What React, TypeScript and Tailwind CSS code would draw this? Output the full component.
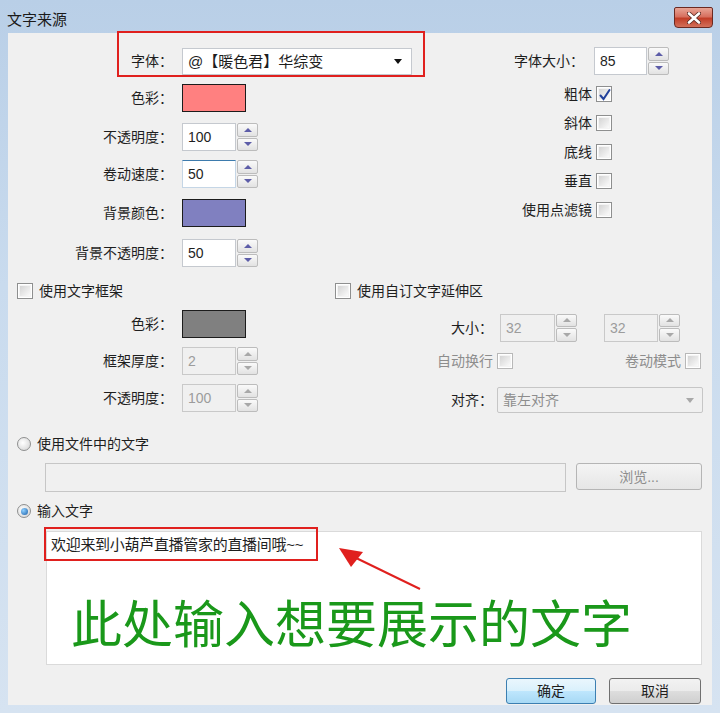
import React from "react";

function Check({ checked = false, disabled = false }: { checked?: boolean; disabled?: boolean }) {
  return (
    <span
      className={`relative flex w-[16px] h-[16px] shrink-0 items-center justify-center border ${
        disabled ? "border-[#b8b8b8]" : "border-[#8e8f8f]"
      } bg-white`}
    >
      <span className="w-[12px] h-[12px] bg-[linear-gradient(135deg,#d4d4d4,#fafafa)] border border-[#f4f4f4]" />
      {checked && (
        <svg className="absolute inset-0" width="16" height="16" viewBox="0 0 16 16">
          <path d="M3.5 8.5 L6.5 12 L12.5 3" fill="none" stroke="#21409a" strokeWidth="2" strokeLinecap="round" />
        </svg>
      )}
    </span>
  );
}

function Radio({ checked = false }: { checked?: boolean }) {
  return (
    <span className="flex w-[14px] h-[14px] shrink-0 items-center justify-center rounded-full border border-[#8e8f8f] bg-[radial-gradient(circle_at_40%_40%,#ffffff,#d0d0d0)]">
      {checked && <span className="w-[7px] h-[7px] rounded-full bg-[radial-gradient(circle_at_35%_35%,#8fd0ff,#1a5ea8)]" />}
    </span>
  );
}

function SpinButtons({ disabled = false }: { disabled?: boolean }) {
  const tri = disabled ? "border-b-[#a8a8a8]" : "border-b-[#5d5da8]";
  const triDown = disabled ? "border-t-[#a8a8a8]" : "border-t-[#5d5da8]";
  return (
    <div className="ml-[1px] flex w-[21px] flex-col gap-[1px]">
      <div className="flex flex-1 items-center justify-center rounded-[2px] border border-[#bcbcbc] bg-[linear-gradient(#fafafa,#e2e2e2)]">
        <span className={`h-0 w-0 border-x-[4px] border-x-transparent border-b-[4px] ${tri}`} />
      </div>
      <div className="flex flex-1 items-center justify-center rounded-[2px] border border-[#bcbcbc] bg-[linear-gradient(#fafafa,#e2e2e2)]">
        <span className={`h-0 w-0 border-x-[4px] border-x-transparent border-t-[4px] ${triDown}`} />
      </div>
    </div>
  );
}

function Spin({
  value,
  className,
  disabled = false,
  focus = false,
}: {
  value: string;
  className: string;
  disabled?: boolean;
  focus?: boolean;
}) {
  return (
    <div className={`flex h-[28px] ${className}`}>
      <div
        className={`flex flex-1 items-center border px-[5px] text-[14px] ${
          disabled
            ? "border-[#c9c9c9] bg-[#f0f0f0] text-[#9c9c9c]"
            : focus
            ? "border-[#c5d6e6] border-t-[#3d7bad] bg-white text-[#1e1e1e]"
            : "border-[#c5c9cf] bg-white text-[#1e1e1e]"
        }`}
      >
        {value}
      </div>
      <SpinButtons disabled={disabled} />
    </div>
  );
}

function Swatch({ color }: { color: string }) {
  return <div className={`h-[28px] w-[64px] border border-[#1c1c1c] ${color}`} />;
}

function LRow({ label, children, mt }: { label: string; children: React.ReactNode; mt: string }) {
  return (
    <div className={`flex h-[28px] items-center ${mt}`}>
      <span className="w-[166px] pr-[1px] text-right text-[14px] text-[#1e1e1e]">{label}</span>
      <div className="ml-[8px]">{children}</div>
    </div>
  );
}

function CRow({ label, checked = false, mt }: { label: string; checked?: boolean; mt: string }) {
  return (
    <div className={`flex h-[17px] items-center ${mt}`}>
      <span className="w-[168px] pr-[4px] text-right text-[14px] text-[#1e1e1e]">{label}</span>
      <Check checked={checked} />
    </div>
  );
}

export default function App() {
  return (
    <div className="relative flex h-[713px] w-[720px] flex-col overflow-hidden bg-[linear-gradient(180deg,#b9cfe7_0%,#c9dbee_40%,#d6e3f1_100%)] font-['Liberation_Sans','Noto_Sans_CJK_SC',sans-serif] leading-none text-[#1e1e1e]">
      {/* title bar */}
      <div className="flex h-[33px] shrink-0 items-start">
        <span className="ml-[7px] mt-[12px] text-[15px] text-[#1a1a1a]">文字来源</span>
        <div className="ml-auto mr-[7px] mt-[7px] flex h-[21px] w-[39px] items-center justify-center rounded-b-[4px] rounded-t-[2px] border border-[#6b2a22] bg-[linear-gradient(180deg,#e8a596_0%,#d7705f_45%,#c23e28_55%,#d2705a_100%)]">
          <svg width="14" height="12" viewBox="0 0 14 12">
            <path d="M2 1.5 L12 10.5 M12 1.5 L2 10.5" stroke="#5a2a22" strokeWidth="4.2" strokeLinecap="round" />
            <path d="M2 1.5 L12 10.5 M12 1.5 L2 10.5" stroke="#ffffff" strokeWidth="2.6" strokeLinecap="round" />
          </svg>
        </div>
      </div>

      {/* client area */}
      <div className="mx-[8px] flex h-[672px] shrink-0 flex-col bg-[#f0f0f0]">
        {/* top section */}
        <div className="flex">
          <div className="w-[420px]">
            <LRow label="字体：" mt="mt-[14px]">
              <div className="flex h-[27px] w-[230px] items-center border border-[#c5c9cf] bg-white pl-[5px] pr-[9px] text-[15px]">
                <span>@【暖色君】华综变</span>
                <span className="ml-auto h-0 w-0 border-x-[4px] border-x-transparent border-t-[5px] border-t-[#111]" />
              </div>
            </LRow>
            <LRow label="色彩：" mt="mt-[9px]">
              <Swatch color="bg-[#ff8080]" />
            </LRow>
            <LRow label="不透明度：" mt="mt-[11px]">
              <Spin value="100" className="w-[76px]" />
            </LRow>
            <LRow label="卷动速度：" mt="mt-[9px]">
              <Spin value="50" className="w-[76px]" focus />
            </LRow>
            <LRow label="背景颜色：" mt="mt-[11px]">
              <Swatch color="bg-[#8080c0]" />
            </LRow>
            <LRow label="背景不透明度：" mt="mt-[12px]">
              <Spin value="50" className="w-[76px]" />
            </LRow>
          </div>
          <div className="flex-1">
            <div className="mt-[14px] flex h-[28px] items-center">
              <span className="w-[166px] pr-[10px] text-right text-[14px]">字体大小：</span>
              <Spin value="85" className="w-[75px]" />
            </div>
            <CRow label="粗体" checked mt="mt-[10px]" />
            <CRow label="斜体" mt="mt-[12px]" />
            <CRow label="底线" mt="mt-[12px]" />
            <CRow label="垂直" mt="mt-[12px]" />
            <CRow label="使用点滤镜" mt="mt-[12px]" />
          </div>
        </div>

        {/* frame / extend headers */}
        <div className="mt-[16px] flex h-[16px] items-center">
          <div className="flex w-[327px] items-center pl-[9px]">
            <Check />
            <span className="ml-[6px] text-[14px]">使用文字框架</span>
          </div>
          <div className="flex items-center">
            <Check />
            <span className="ml-[6px] text-[14px]">使用自订文字延伸区</span>
          </div>
        </div>

        <div className="flex">
          <div className="w-[327px]">
            <LRow label="色彩：" mt="mt-[11px]">
              <Swatch color="bg-[#808080]" />
            </LRow>
            <LRow label="框架厚度：" mt="mt-[9px]">
              <Spin value="2" className="w-[76px]" disabled />
            </LRow>
            <LRow label="不透明度：" mt="mt-[9px]">
              <Spin value="100" className="w-[76px]" disabled />
            </LRow>
          </div>
          <div className="flex-1">
            <div className="mt-[14px] flex h-[29px] items-center">
              <span className="w-[158px] text-right text-[14px]">大小：</span>
              <Spin value="32" className="ml-[7px] w-[77px]" disabled />
              <Spin value="32" className="ml-[27px] w-[76px]" disabled />
            </div>
            <div className="mt-[11px] flex h-[16px] items-center">
              <span className="w-[162px] pr-[4px] text-right text-[14px] text-[#8d8d8d]">自动换行</span>
              <Check disabled />
              <span className="w-[172px] pr-[4px] text-right text-[14px] text-[#8d8d8d]">卷动模式</span>
              <Check disabled />
            </div>
            <div className="mt-[18px] flex h-[26px] items-center">
              <span className="w-[158px] text-right text-[14px]">对齐：</span>
              <div className="ml-[4px] flex h-[26px] w-[206px] items-center rounded-[2px] border border-[#c6c6c6] bg-[#f0f0f0] pl-[5px] pr-[8px] text-[14px] text-[#8d8d8d]">
                <span>靠左对齐</span>
                <span className="ml-auto h-0 w-0 border-x-[4px] border-x-transparent border-t-[5px] border-t-[#a8a8a8]" />
              </div>
            </div>
          </div>
        </div>

        {/* text source */}
        <div className="mt-[24px] flex h-[14px] items-center pl-[9px]">
          <Radio />
          <span className="ml-[6px] text-[14px]">使用文件中的文字</span>
        </div>
        <div className="mt-[12px] flex h-[29px] pl-[37px]">
          <div className="w-[521px] border border-[#c6c6c6] bg-[#f0f0f0]" />
          <div className="ml-[10px] flex h-[27px] w-[126px] items-center justify-center rounded-[3px] border border-[#b5b5b5] bg-[linear-gradient(#f4f4f4,#e6e6e6)] text-[14px] text-[#8d8d8d]">
            浏览...
          </div>
        </div>
        <div className="mt-[12px] flex h-[14px] items-center pl-[9px]">
          <Radio checked />
          <span className="ml-[6px] text-[14px]">输入文字</span>
        </div>
        <div className="ml-[38px] mt-[13px] h-[134px] w-[656px] border border-[#dadada] bg-white">
          <div className="pl-[4px] pt-[5px] text-[15px] tracking-[-0.3px]">欢迎来到小葫芦直播管家的直播间哦~~</div>
          <div className="mt-[46px] pl-[24px] text-[51px] leading-[56px] text-[#1a981a]">此处输入想要展示的文字</div>
        </div>

        {/* buttons */}
        <div className="mt-[13px] flex justify-end pr-[11px]">
          <div className="flex h-[26px] w-[90px] items-center justify-center rounded-[3px] border border-[#3c7fb1] bg-[linear-gradient(#eaf6fd_0%,#d9f0fc_50%,#bee6fd_51%,#a7d9f5_100%)] text-[14px]">
            确定
          </div>
          <div className="ml-[13px] flex h-[26px] w-[92px] items-center justify-center rounded-[3px] border border-[#707070] bg-[linear-gradient(#f2f2f2_0%,#ebebeb_50%,#dddddd_51%,#cfcfcf_100%)] text-[14px]">
            取消
          </div>
        </div>
      </div>

      {/* annotations */}
      <div className="absolute left-[117px] top-[31px] h-[46px] w-[308px] border-2 border-[#e0201e]" />
      <div className="absolute left-[44px] top-[527px] h-[34px] w-[274px] border-2 border-[#e0201e]" />
      <svg className="absolute left-0 top-0" width="720" height="713" viewBox="0 0 720 713">
        <line x1="420" y1="589" x2="352" y2="556" stroke="#e0201e" strokeWidth="2" />
        <polygon points="339,548 363,552 351,567" fill="#e0201e" />
      </svg>
    </div>
  );
}
